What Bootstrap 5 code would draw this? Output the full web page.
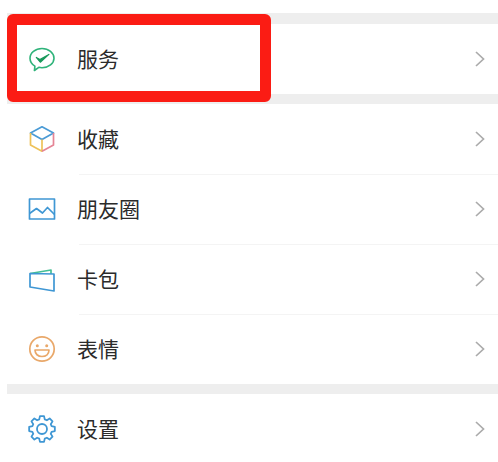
<!DOCTYPE html>
<html lang="zh">
<head>
    <meta charset="UTF-8">
    <meta name="viewport" content="width=device-width, initial-scale=1.0">
    <title>我</title>
    <link href="https://cdn.jsdelivr.net/npm/bootstrap@5.3.3/dist/css/bootstrap.min.css" rel="stylesheet">
    <style>
        html, body { height: 462px; overflow: hidden; background: #fff; }
        .phone-page { padding: 13px 0 0 7px; position: relative; height: 462px; overflow: hidden; font-family: "Noto Sans CJK SC", "Liberation Sans", sans-serif; }
        .gap-band { height: 11px; background: #eeeeee; }
        .gap-band.thin { height: 10px; }
        .menu-row { height: 70px; padding-left: 21px; padding-right: 12px; background: #fff; }
        .menu-icon { width: 28px; height: 28px; flex: none; display: block; }
        .menu-text { margin-left: 21px; padding-bottom: 2px; font-size: 21px; line-height: 1; color: #2b2b2b; flex: 1 1 auto; height: 70px; display: flex; align-items: center; }
        .menu-chevron { width: 12px; height: 18px; flex: none; }
        .row-line { position: relative; }
        .row-line::after { content: ""; position: absolute; left: 72px; right: 0; bottom: -1px; height: 1px; background: #f4f4f4; z-index: 1; }
        .red-frame { position: absolute; left: 7px; top: 14px; width: 264px; height: 88px; border: 11px solid #fb1c14; border-left-width: 10px; border-radius: 6px; }
    </style>
</head>
<body>
    <div class="phone-page">
        <div class="gap-band"></div>
        <div class="menu-row d-flex align-items-center">
            <svg class="menu-icon" viewBox="0 0 28 28" fill="none">
                <path d="M14 3.5C7.3 3.5 2 7.8 2 13.2c0 3.3 1.9 6.1 4.9 7.9l-.5 4.4 4.4-3.2c1 .3 2.1.4 3.2.4 6.7 0 12-4.3 12-9.5S20.7 3.5 14 3.5z" stroke="#2fb37a" stroke-width="1.6" stroke-linejoin="round"/>
                <path d="M8.3 12.4l3.6 2.2 9-5.2-8.6 7.8z" fill="#1a9a5c" stroke="#1a9a5c" stroke-width="1.2" stroke-linejoin="round"/>
            </svg>
            <span class="menu-text">服务</span>
            <svg class="menu-chevron" viewBox="0 0 12 18" fill="none"><path d="M2 2l7.5 7L2 16" stroke="#ababab" stroke-width="1.7"/></svg>
        </div>
        <div class="gap-band thin"></div>
        <div class="menu-row row-line d-flex align-items-center">
            <svg class="menu-icon" viewBox="0 0 28 28" fill="none" stroke-width="1.7" stroke-linejoin="round">
                <path d="M2.5 8L14 1.8 25.5 8 14 14.5z" stroke="#4a9bd6"/>
                <path d="M2.5 8v12L14 26.2V14.5" stroke="#eec25a"/>
                <path d="M25.5 8v12L14 26.2" stroke="#e58596"/>
            </svg>
            <span class="menu-text">收藏</span>
            <svg class="menu-chevron" viewBox="0 0 12 18" fill="none"><path d="M2 2l7.5 7L2 16" stroke="#ababab" stroke-width="1.7"/></svg>
        </div>
        <div class="menu-row row-line d-flex align-items-center">
            <svg class="menu-icon" viewBox="0 0 28 28" fill="none" stroke="#3f97d4" stroke-width="1.7" stroke-linejoin="round">
                <rect x="1.5" y="4" width="25" height="20"/>
                <path d="M1.5 18.5l7-5 6 4.5 5-5.5 7 7"/>
            </svg>
            <span class="menu-text">朋友圈</span>
            <svg class="menu-chevron" viewBox="0 0 12 18" fill="none"><path d="M2 2l7.5 7L2 16" stroke="#ababab" stroke-width="1.7"/></svg>
        </div>
        <div class="menu-row row-line d-flex align-items-center">
            <svg class="menu-icon" viewBox="0 0 28 28" fill="none" stroke-width="1.7" stroke-linejoin="round">
                <path d="M2 8.5L23 5v4" stroke="#45bf95"/>
                <path d="M2 8.5L26 9v17L2 22z" stroke="#3f97d4"/>
            </svg>
            <span class="menu-text">卡包</span>
            <svg class="menu-chevron" viewBox="0 0 12 18" fill="none"><path d="M2 2l7.5 7L2 16" stroke="#ababab" stroke-width="1.7"/></svg>
        </div>
        <div class="menu-row d-flex align-items-center">
            <svg class="menu-icon" viewBox="0 0 28 28" fill="none" stroke="#e9a86a" stroke-width="1.7">
                <circle cx="14" cy="14" r="12.2"/>
                <circle cx="9.3" cy="10.8" r="1.5" fill="#e9a86a" stroke="none"/>
                <circle cx="18.7" cy="10.8" r="1.5" fill="#e9a86a" stroke="none"/>
                <path d="M7 15h14c0 4-3 6.5-7 6.5S7 19 7 15z" stroke-linejoin="round"/>
            </svg>
            <span class="menu-text">表情</span>
            <svg class="menu-chevron" viewBox="0 0 12 18" fill="none"><path d="M2 2l7.5 7L2 16" stroke="#ababab" stroke-width="1.7"/></svg>
        </div>
        <div class="gap-band thin"></div>
        <div class="menu-row d-flex align-items-center">
            <svg class="menu-icon" viewBox="0 0 28 28" fill="none" stroke="#3f97d4" stroke-width="1.8" stroke-linejoin="round">
                <path d="M11.97 1.16H16.03L16.76 4.39 18.85 5.25 21.64 3.48 24.52 6.36 22.75 9.15 23.61 11.24 26.84 11.97V16.03L23.61 16.76 22.75 18.85 24.52 21.64 21.64 24.52 18.85 22.75 16.76 23.61 16.03 26.84H11.97L11.24 23.61 9.15 22.75 6.36 24.52 3.48 21.64 5.25 18.85 4.39 16.76 1.16 16.03V11.97L4.39 11.24 5.25 9.15 3.48 6.36 6.36 3.48 9.15 5.25 11.24 4.39z"/>
                <circle cx="14" cy="14" r="5"/>
            </svg>
            <span class="menu-text">设置</span>
            <svg class="menu-chevron" viewBox="0 0 12 18" fill="none"><path d="M2 2l7.5 7L2 16" stroke="#ababab" stroke-width="1.7"/></svg>
        </div>
        <div class="red-frame"></div>
    </div>
    <script src="https://cdn.jsdelivr.net/npm/bootstrap@5.3.3/dist/js/bootstrap.bundle.min.js"></script>
</body>
</html>
